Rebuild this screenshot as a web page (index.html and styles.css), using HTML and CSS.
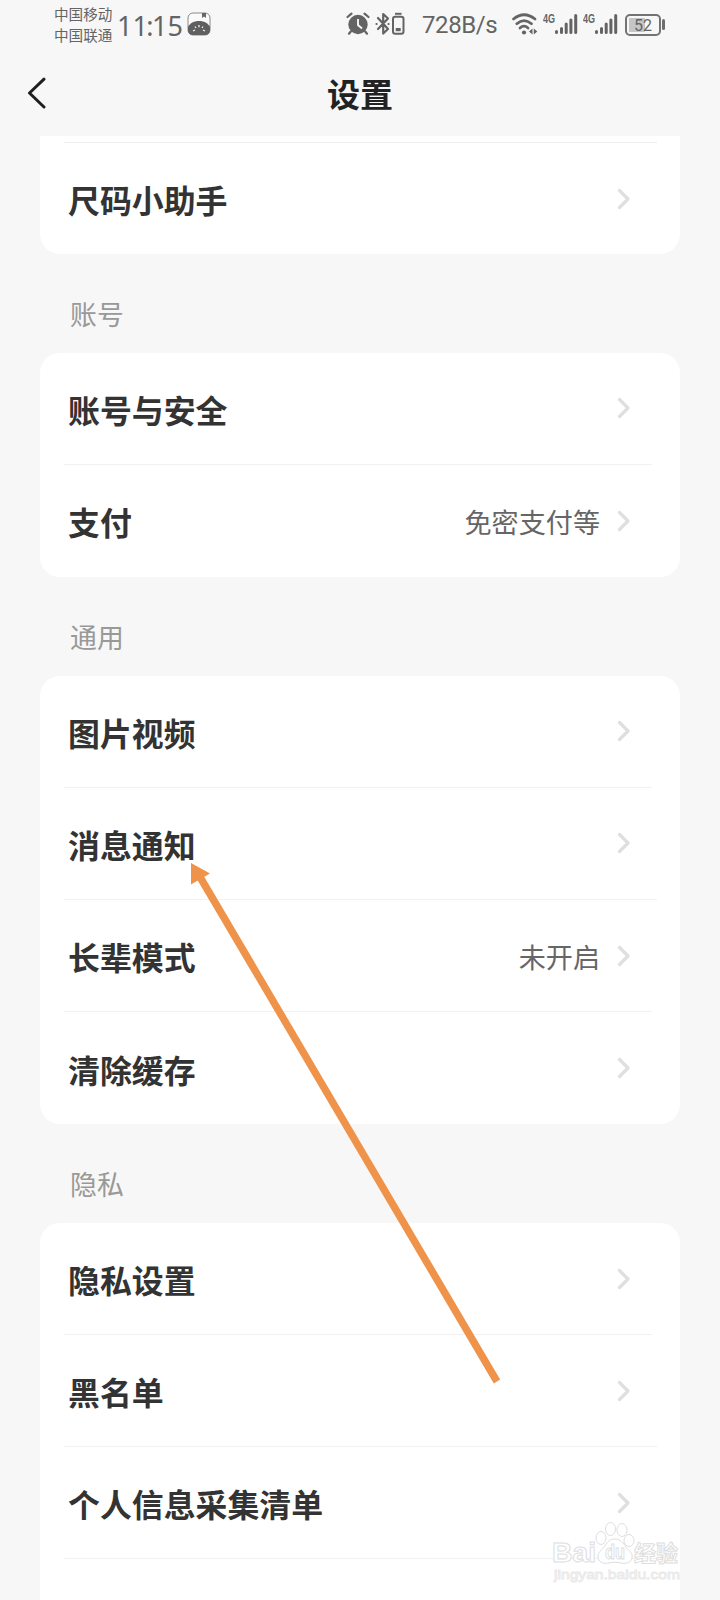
FILE: index.html
```html
<!DOCTYPE html>
<html lang="zh-CN">
<head>
<meta charset="utf-8">
<title>设置</title>
<link rel="stylesheet" href="styles.css">
</head>
<body>
<svg class="defs" width="0" height="0">
  <symbol id="next" viewBox="0 0 14 22"><path d="M2.500 2.500 11 11 2.500 19.500" fill="none" stroke="#dfdfdf" stroke-width="3.300" stroke-linecap="round" stroke-linejoin="round"/></symbol>
  <symbol id="signal" viewBox="0 0 24 22"><path d="M2.500 19.500v-1M7.500 19.500v-4M12.200 19.500v-8.500M16.900 19.500v-12.500M21.700 19.500v-17" stroke="#646464" stroke-width="3" stroke-linecap="round"/></symbol>
</svg>
<div class="screen">
  <div class="status">
    <div class="carriers"><span>中国移动</span><span>中国联通</span></div>
    <span class="clock">11<span class="colon">:</span>15</span>
    <svg class="app-icon" width="24" height="24" viewBox="0 0 24 24">
      <rect x="1" y="1" width="22" height="22" rx="5" fill="#fafafa" stroke="#8a8a8a"/>
      <path d="M15 1h4v5l-2-1.500L15 6z" fill="#666"/>
      <path d="M1 15C3 11 7 9 12 9s9 2 11 6v3c0 3-2 5-5 5H6c-3 0-5-2-5-5z" fill="#5f5f5f"/>
      <path d="M6 19 8 18M8 14.500 9 16M12 13v2.200M16 14.500 15 16M18 19l-2-1" stroke="#eee" stroke-width="1.300"/>
    </svg>
    <svg class="alarm" width="24" height="24" viewBox="0 0 24 24">
      <circle cx="12" cy="12.500" r="9.700" fill="#646464"/>
      <path d="M1.500 5 5.500 1.600M22.500 5 18.500 1.600M4.800 19.500 3 21.700M19.200 19.500 21 21.700" stroke="#646464" stroke-width="2.200" stroke-linecap="round"/>
      <path d="M12 7v6l4 3.500" fill="none" stroke="#f7f7f7" stroke-width="1.900"/>
    </svg>
    <svg class="bluetooth" width="30" height="24" viewBox="0 0 30 24">
      <path d="M3 6 13 17 8.200 21.500V2L13 6.500 3 17M1.500 12h.1M13.500 12h.1" fill="none" stroke="#646464" stroke-width="2.200" stroke-linecap="round" stroke-linejoin="round"/>
      <rect x="18" y="4.700" width="10.500" height="17" rx="2.200" fill="none" stroke="#646464" stroke-width="2"/>
      <path d="M20 1.800h6.500" stroke="#646464" stroke-width="2"/>
      <path d="M20.700 16h5v3.200h-5z" fill="#646464"/>
    </svg>
    <span class="speed">728B/s</span>
    <svg class="wifi" width="26" height="23" viewBox="0 0 26 23">
      <path d="M1.500 6Q12 -2.500 23 6M4.800 10.700Q12 4.400 19.500 10.700M8 15Q12 11.300 16 15" fill="none" stroke="#646464" stroke-width="2.700" stroke-linecap="round"/>
      <circle cx="12" cy="19.500" r="2.100" fill="#646464"/>
      <path d="M20.500 15.500v6l-3.500-3zM21.800 15.500v6l3.500-3z" fill="#646464"/>
    </svg>
    <span class="gen">4G</span>
    <svg class="bars" width="24" height="22"><use href="#signal"/></svg>
    <span class="gen gen-two">4G</span>
    <svg class="bars" width="24" height="22"><use href="#signal"/></svg>
    <span class="battery">52</span><i class="battery-cap"></i>
  </div>

  <div class="header">
    <svg class="back" width="20" height="32" viewBox="0 0 20 32"><path d="M18 2.200 3.500 16 18 30" fill="none" stroke="#1f1f1f" stroke-width="3" stroke-linecap="round" stroke-linejoin="round"/></svg>
    <h1 class="title">设置</h1>
  </div>

  <div class="card card-first">
    <div class="row row-wide"><span>尺码小助手</span><svg class="next"><use href="#next"/></svg></div>
  </div>
  <h2 class="section">账号</h2>
  <div class="card">
    <div class="row"><span>账号与安全</span><svg class="next"><use href="#next"/></svg></div>
    <div class="row"><span>支付</span><span class="value">免密支付等</span><svg class="next"><use href="#next"/></svg></div>
  </div>
  <h2 class="section">通用</h2>
  <div class="card">
    <div class="row"><span>图片视频</span><svg class="next"><use href="#next"/></svg></div>
    <div class="row row-wide"><span>消息通知</span><svg class="next"><use href="#next"/></svg></div>
    <div class="row"><span>长辈模式</span><span class="value">未开启</span><svg class="next"><use href="#next"/></svg></div>
    <div class="row"><span>清除缓存</span><svg class="next"><use href="#next"/></svg></div>
  </div>
  <h2 class="section">隐私</h2>
  <div class="card card-last">
    <div class="row"><span>隐私设置</span><svg class="next"><use href="#next"/></svg></div>
    <div class="row row-wide"><span>黑名单</span><svg class="next"><use href="#next"/></svg></div>
    <div class="row row-wide"><span>个人信息采集清单</span><svg class="next"><use href="#next"/></svg></div>
    <div class="row"></div>
  </div>

  <svg class="pointer" width="312" height="524" viewBox="0 0 312 524">
    <path d="M10 16 307 520.500" stroke="#ef934b" stroke-width="7.400"/>
    <path d="M1 2V23.500L20 12.500z" fill="#ef934b"/>
  </svg>

  <svg class="watermark" width="130" height="66" viewBox="0 0 130 66">
    <g fill="#fff" stroke="#dedede" stroke-width="1">
      <text class="wm-brand" x="0" y="43" font-size="28" textLength="44" lengthAdjust="spacingAndGlyphs">Bai</text>
      <ellipse cx="49" cy="19" rx="5" ry="6.500"/><ellipse cx="58.500" cy="10" rx="5" ry="6.500"/>
      <ellipse cx="70" cy="11" rx="5" ry="6.500"/><ellipse cx="77" cy="21.500" rx="5" ry="6"/>
      <path d="M63 20c6 0 8 4 11 8s7 6 6 11-7 6-11 5-8-1-12 0-10 0-11-5 3-7 6-11 5-8 11-8z"/>
      <text class="wm-brand" x="53" y="40" font-size="20" textLength="20" lengthAdjust="spacingAndGlyphs">du</text>
      <text class="wm-cn" x="82" y="41.500" font-size="22">经验</text>
    </g>
    <text class="wm-url" x="2" y="60" font-size="13.500" textLength="126" lengthAdjust="spacingAndGlyphs">jingyan.baidu.com</text>
  </svg>
</div>
</body>
</html>
```
FILE: styles.css
```css
* { box-sizing: border-box; }
body {
  margin: 0;
  background: #f7f7f7;
  font-family: "Noto Sans CJK SC", sans-serif;
}
.defs { position: absolute; }
.screen {
  position: relative;
  width: 720px;
  height: 1600px;
  overflow: hidden;
}
.status {
  display: flex;
  align-items: center;
  height: 50px;
  padding-left: 54px;
  color: #646464;
}
.status > * { flex: none; }
.carriers {
  display: flex;
  flex-direction: column;
  width: 60px;
  font-size: 14.6px;
  line-height: 21px;
  white-space: nowrap;
  padding-bottom: 3px;
}
.clock {
  width: 69px;
  margin-left: 3px;
  font: 27px/51px "Noto Sans", sans-serif;
  white-space: nowrap;
}
.colon { margin: 0 -1.6px; }
.app-icon { margin: 0 0 2px 1px; }
.alarm { margin: 0 0 2px 135px; }
.bluetooth { margin: 0 0 2px 5px; }
.speed {
  width: 76px;
  margin-left: 17px;
  font: 24px/52px Roboto, sans-serif;
  letter-spacing: -0.4px;
}
.wifi { margin: 0 0 2px 14px; }
.gen {
  width: 12px;
  margin: 0 0 13px 5px;
  font: 700 12.5px/14px "Liberation Sans", sans-serif;
  transform: scaleX(.72);
  transform-origin: left;
}
.bars { margin: 0 0 2px -1px; }
.gen-two { margin-left: 5px; }
.battery {
  width: 36px;
  height: 22px;
  margin: 0 0 1px 7px;
  border: 2px solid #737373;
  border-radius: 5px;
  background: linear-gradient(90deg, #c5c5c5 0 16px, transparent 16px) 2px 2px / 100% 14px no-repeat;
  font: 16px/19px Roboto, sans-serif;
  text-align: center;
}
.battery-cap {
  width: 3px;
  height: 11px;
  margin: 0 0 1px 1px;
  border-radius: 2px;
  background: #6d6d6d;
}
.header {
  display: grid;
  grid-template-columns: 80px 1fr 80px;
  height: 86px;
}
.back { margin: 27px 0 0 26px; }
.title {
  margin: 0;
  padding-top: 18px;
  font-size: 33px;
  line-height: 50px;
  font-weight: 700;
  text-align: center;
  color: #222;
}
.card {
  margin: 0 40px;
  border-radius: 20px;
  background: #fff;
  overflow: hidden;
}
.card-first {
  height: 118px;
  padding-top: 6px;
  border-radius: 0 0 20px 20px;
}
.card-first .row { border-top: 1px solid #ededed; }
.card-last { border-radius: 20px 20px 0 0; }
.row {
  display: flex;
  align-items: center;
  height: 112.2px;
  margin: 0 28px 0 24px;
  padding: 0 21px 0 4px;
  color: #333;
  font-size: 31.9px;
  line-height: 46px;
  font-weight: 700;
}
.row-wide {
  margin-right: 23px;
  padding-right: 26px;
}
.row:not(:last-child) { border-bottom: 1px solid #f1f1f1; }
.row span { padding-top: 1px; white-space: nowrap; }
.next {
  width: 14px;
  height: 22px;
  margin-left: auto;
}
.row .value {
  margin-left: auto;
  padding-top: 2px;
  font-size: 27.1px;
  font-weight: 400;
  color: #666;
}
.value + .next { margin-left: 17px; }
.section {
  height: 98.6px;
  margin: 0;
  padding: 40px 0 0 70px;
  font-size: 26.9px;
  line-height: 40px;
  font-weight: 400;
  color: #999;
}
.pointer {
  position: absolute;
  left: 190px;
  top: 861px;
}
.watermark {
  position: absolute;
  left: 552px;
  top: 1519px;
}
.wm-brand { font-family: "Liberation Sans", sans-serif; font-weight: 700; }
.wm-cn { font-family: "Noto Sans CJK SC", sans-serif; font-weight: 700; }
.wm-url {
  font-family: "Liberation Sans", sans-serif;
  fill: #fdfdfd;
  stroke: #e8e8e8;
  stroke-width: 0.8px;
}
```
